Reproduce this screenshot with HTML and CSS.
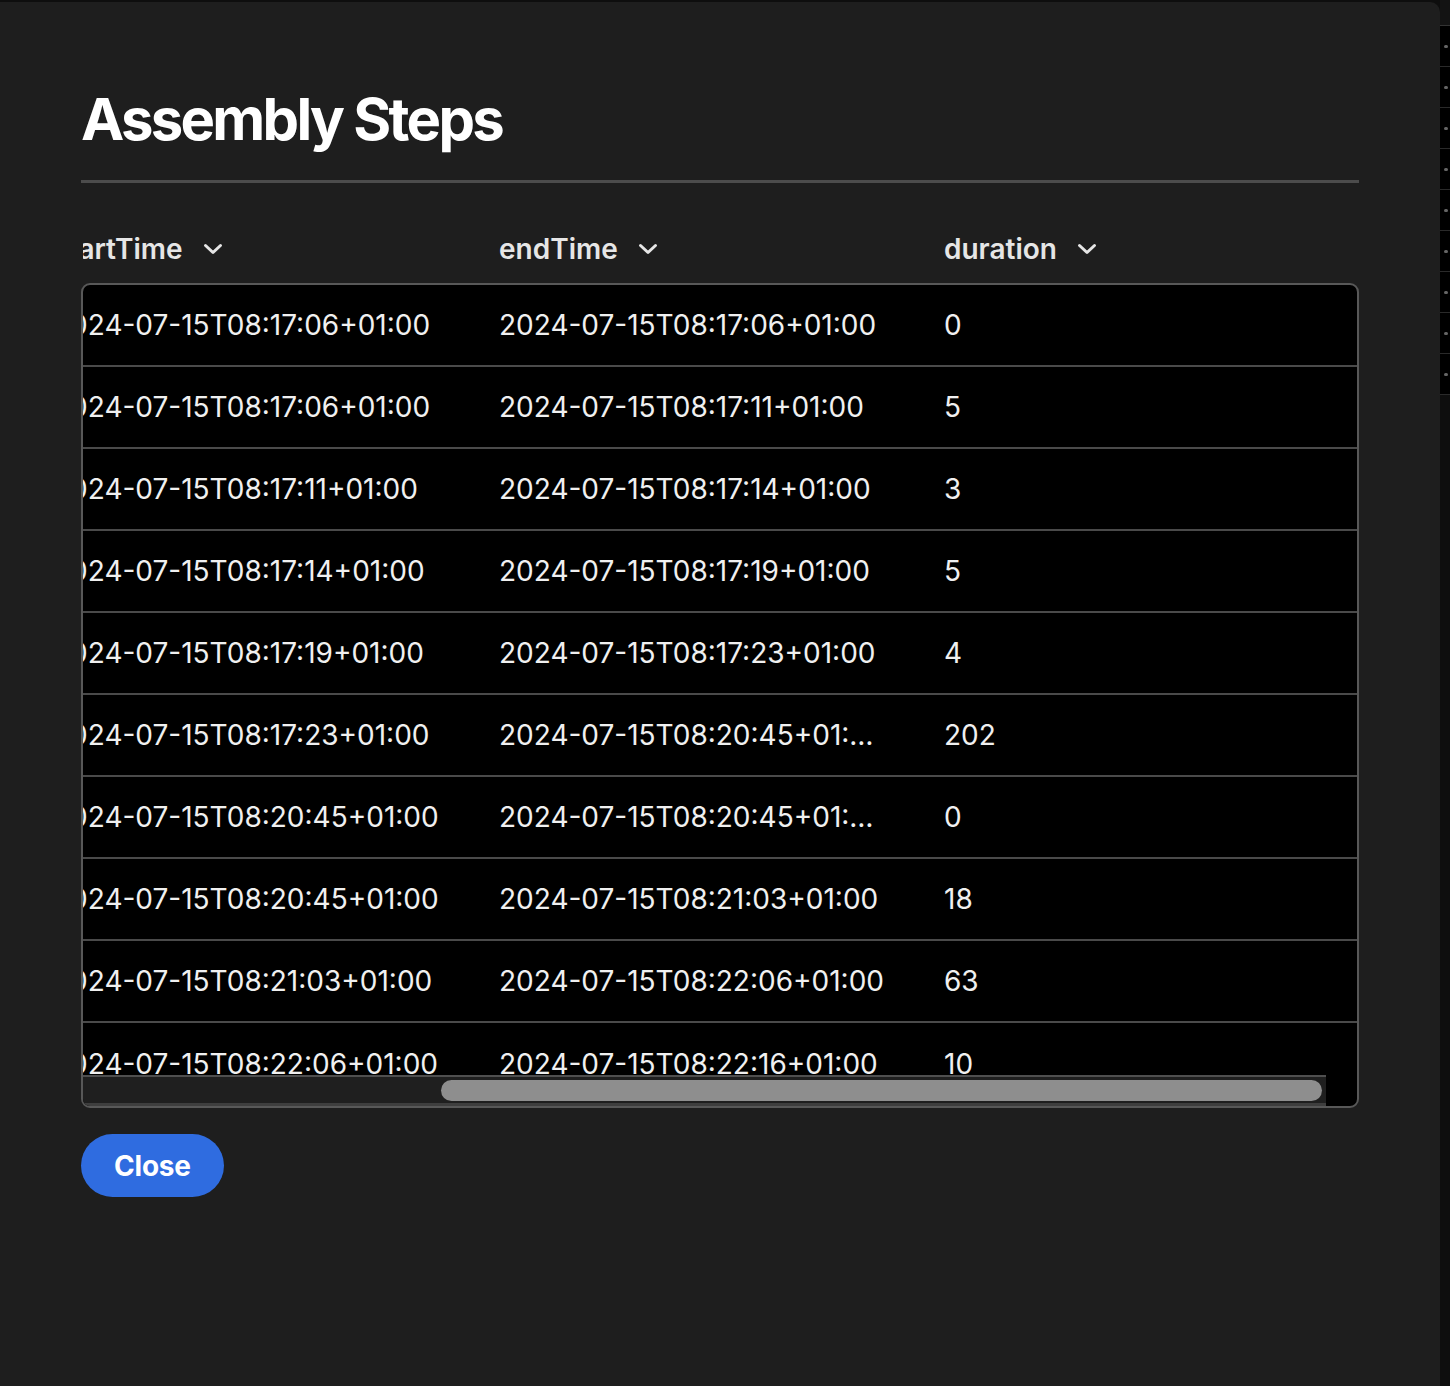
FILE: index.html
```html
<!DOCTYPE html>
<html lang="en">
<head>
<meta charset="utf-8">
<title>Assembly Steps</title>
<link rel="stylesheet" href="styles.css">
</head>
<body>
<div class="screen">
  <div class="modal">
    <h1 class="title">Assembly Steps</h1>
    <div class="divider"></div>
    <div class="head-clip">
      <div class="grid">
        <div class="hcell"><span>startTime</span><svg class="chev" viewBox="0 0 20 12"><path d="M2.5 2.5 L10 9.5 L17.5 2.5"/></svg></div>
        <div class="hcell"><span>endTime</span><svg class="chev" viewBox="0 0 20 12"><path d="M2.5 2.5 L10 9.5 L17.5 2.5"/></svg></div>
        <div class="hcell"><span>duration</span><svg class="chev" viewBox="0 0 20 12"><path d="M2.5 2.5 L10 9.5 L17.5 2.5"/></svg></div>
      </div>
    </div>
    <div class="box">
      <div class="body-clip">
        <div class="row"><div class="grid"><div class="cell">2024-07-15T08:17:06+01:00</div><div class="cell">2024-07-15T08:17:06+01:00</div><div class="cell">0</div></div></div>
        <div class="row"><div class="grid"><div class="cell">2024-07-15T08:17:06+01:00</div><div class="cell">2024-07-15T08:17:11+01:00</div><div class="cell">5</div></div></div>
        <div class="row"><div class="grid"><div class="cell">2024-07-15T08:17:11+01:00</div><div class="cell">2024-07-15T08:17:14+01:00</div><div class="cell">3</div></div></div>
        <div class="row"><div class="grid"><div class="cell">2024-07-15T08:17:14+01:00</div><div class="cell">2024-07-15T08:17:19+01:00</div><div class="cell">5</div></div></div>
        <div class="row"><div class="grid"><div class="cell">2024-07-15T08:17:19+01:00</div><div class="cell">2024-07-15T08:17:23+01:00</div><div class="cell">4</div></div></div>
        <div class="row"><div class="grid"><div class="cell">2024-07-15T08:17:23+01:00</div><div class="cell">2024-07-15T08:20:45+01:…</div><div class="cell">202</div></div></div>
        <div class="row"><div class="grid"><div class="cell">2024-07-15T08:20:45+01:00</div><div class="cell">2024-07-15T08:20:45+01:…</div><div class="cell">0</div></div></div>
        <div class="row"><div class="grid"><div class="cell">2024-07-15T08:20:45+01:00</div><div class="cell">2024-07-15T08:21:03+01:00</div><div class="cell">18</div></div></div>
        <div class="row"><div class="grid"><div class="cell">2024-07-15T08:21:03+01:00</div><div class="cell">2024-07-15T08:22:06+01:00</div><div class="cell">63</div></div></div>
        <div class="row last"><div class="grid"><div class="cell">2024-07-15T08:22:06+01:00</div><div class="cell">2024-07-15T08:22:16+01:00</div><div class="cell">10</div></div></div>
      </div>
      <div class="hscroll"><div class="thumb"></div></div>
    </div>
    <div class="actions"><button class="btn">Close</button></div>
  </div>
  <div class="backdrop">
    <div class="bd-head"></div>
    <div class="bd-rows">
      <div class="bd-row"><i></i></div>
      <div class="bd-row"><i></i></div>
      <div class="bd-row"><i></i></div>
      <div class="bd-row"><i></i></div>
      <div class="bd-row"><i></i></div>
      <div class="bd-row"><i></i></div>
      <div class="bd-row"><i></i></div>
      <div class="bd-row"><i></i></div>
      <div class="bd-row"><i></i></div>
    </div>
  </div>
</div>
</body>
</html>
```
FILE: styles.css
```css
* { box-sizing: border-box; }
html, body { margin: 0; padding: 0; }
body {
  background: #0e0e0e;
  font-family: Inter, "Noto Sans", sans-serif;
  color: #f2f2f2;
  width: 1450px;
  height: 1386px;
  overflow: hidden;
}
.screen {
  display: flex;
  height: 1386px;
  padding-top: 2px;
}
.modal {
  width: 1440px;
  flex: none;
  background: #1e1e1e;
  border-radius: 0 10px 10px 0;
  padding: 82px 81px 0 81px;
  height: 1400px;
}
.title {
  margin: 0;
  font-size: 58px;
  line-height: 70px;
  font-weight: 700;
  letter-spacing: -2.7px;
  color: #ffffff;
}
.divider {
  margin-top: 26px;
  height: 3px;
  background: #4c4c4c;
}
.head-clip {
  margin-top: 31px;
  height: 69px;
  overflow: hidden;
  border-left: 2px solid transparent;
  border-right: 2px solid transparent;
}
.grid {
  display: grid;
  grid-template-columns: 445px 445px 445px;
  margin-left: -30px;
  height: 100%;
  align-items: center;
}
.grid > :nth-child(n+2) { margin-left: 1px; }
.hcell {
  display: flex;
  align-items: center;
  gap: 20px;
  font-size: 28px;
  font-weight: 600;
  color: #e6e6e6;
  letter-spacing: 0;
  white-space: nowrap;
}
.chev {
  width: 20px;
  height: 12px;
  fill: none;
  stroke: #e6e6e6;
  stroke-width: 3;
  stroke-linecap: round;
  stroke-linejoin: round;
}
.box {
  position: relative;
  height: 825px;
  border: 2px solid #585858;
  border-radius: 9px;
  background: #000;
  overflow: hidden;
}
.body-clip {
  overflow: hidden;
  height: 100%;
}
.row {
  height: 82px;
  border-bottom: 2px solid #4a4a4a;
}
.row.last { border-bottom: none; }
.cell {
  font-size: 28px;
  font-weight: 400;
  color: #f0f0f0;
  white-space: nowrap;
  letter-spacing: 0;
}
.hscroll {
  position: absolute;
  left: 0;
  bottom: 0;
  width: 1243px;
  height: 31px;
  background: #1f1f1f;
  border-top: 2px solid #4f4f4f;
  border-bottom: 3px solid #3e3e3e;
  padding: 3px 0 0 358px;
}
.thumb {
  width: 881px;
  height: 21px;
  border-radius: 11px;
  background: #8e8e8e;
}
.actions {
  margin-top: 26px;
}
.btn {
  height: 63px;
  padding: 0 33px;
  border: none;
  border-radius: 32px;
  background: #2f6ce0;
  color: #fff;
  font-family: Inter, "Noto Sans", sans-serif;
  font-size: 28px;
  font-weight: 700;
  letter-spacing: -0.2px;
}
.backdrop {
  flex: 1;
  margin-top: -2px;
  display: flex;
  flex-direction: column;
}
.bd-head {
  height: 26px;
  background: #131313;
  border-bottom: 1px solid #333;
}
.bd-rows { background: #000; }
.bd-row {
  height: 41px;
  border-bottom: 1px solid #2a2a2a;
  display: flex;
  align-items: center;
  padding-left: 4px;
}
.bd-row i {
  display: block;
  width: 4px;
  height: 3px;
  border-radius: 2px;
  background: #666;
}
```
